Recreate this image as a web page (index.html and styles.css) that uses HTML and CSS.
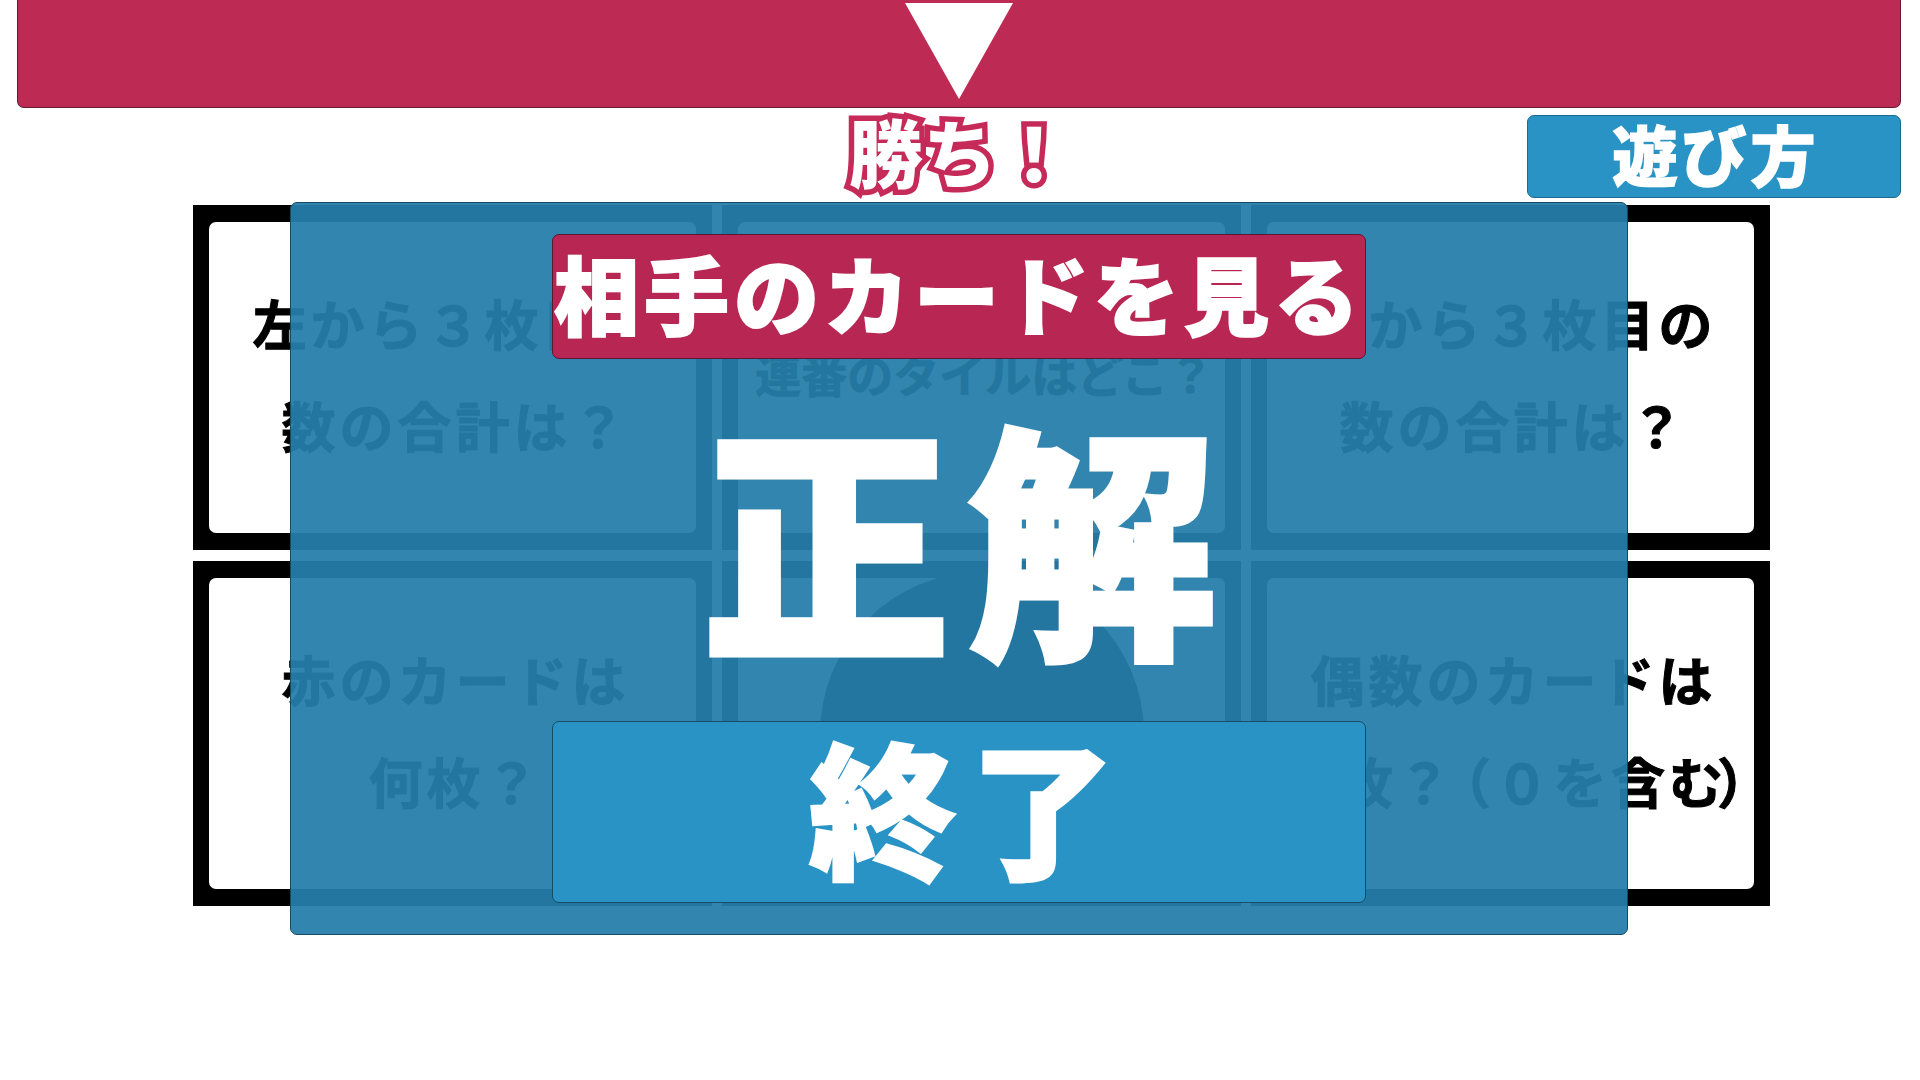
FILE: index.html
```html
<!DOCTYPE html>
<html>
<head>
    <title>Card Game</title>
    <link rel="stylesheet" href="styles.css">
</head>
<body>
    <div class="top-bar">
        <svg class="pointer" viewBox="0 0 108 96"><polygon points="0,0 108,0 54,96" fill="#fff"/></svg>
    </div>

    <div class="status-row">
        <div class="result">勝ち！</div>
        <button class="help-btn">遊び方</button>
    </div>

    <div class="question-grid">
        <div class="card"><div class="card-inner"><p>左から３枚目の</p><p>数の合計は？</p></div></div>
        <div class="card"><div class="card-inner card-small"><p>連番のタイルはどこ？</p></div></div>
        <div class="card"><div class="card-inner"><p>右から３枚目の</p><p>数の合計は？</p></div></div>
        <div class="card"><div class="card-inner"><p>赤のカードは</p><p>何枚？</p></div></div>
        <div class="card"><div class="card-inner card-center"><div class="circle"></div></div></div>
        <div class="card"><div class="card-inner"><p>偶数のカードは</p><p class="line-paren">何枚？<span class="paren-open">（</span>０を含む<span class="paren-close">）</span></p></div></div>
    </div>

    <div class="overlay">
        <button class="see-btn">相手のカードを見る</button>
        <div class="answer">正解</div>
        <button class="end-btn">終了</button>
    </div>
</body>
</html>
```

FILE: styles.css
```css
* {
    box-sizing: border-box;
}

body {
    margin: 0;
    background-color: #fff;
    font-family: "Noto Sans CJK JP", "Noto Sans", sans-serif;
}

.top-bar {
    height: 108px;
    margin: 0 19px 0 17px;
    padding-top: 3px;
    display: flex;
    justify-content: center;
    background-color: #bd2a53;
    border: 1px solid #6b1a33;
    border-top: none;
    border-radius: 0 0 7px 7px;
}

.pointer {
    width: 108px;
    height: 96px;
}

.status-row {
    position: relative;
    height: 97px;
    display: flex;
    justify-content: center;
    align-items: flex-start;
}

.result {
    font-size: 74px;
    line-height: 84px;
    font-weight: 900;
    color: #fff;
    -webkit-text-stroke: 11px #c52a58;
    paint-order: stroke fill;
}

.help-btn {
    position: absolute;
    right: 19px;
    top: 7px;
    width: 374px;
    height: 83px;
    padding: 0 0 6px 4px;
    font-family: inherit;
    font-size: 65px;
    line-height: 1;
    font-weight: 900;
    letter-spacing: 4px;
    color: #fff;
    -webkit-text-stroke: 1.5px #fff;
    background-color: #2a93c5;
    border: 1px solid #1c6a8f;
    border-radius: 7px;
}

.question-grid {
    width: 1577px;
    margin-left: 193px;
    display: grid;
    grid-template-columns: repeat(3, 519px);
    grid-auto-rows: 345px;
    column-gap: 10px;
    row-gap: 11px;
}

.card {
    padding: 17px 16px;
    background-color: #000;
}

.card-inner {
    height: 100%;
    padding-top: 50px;
    background-color: #fff;
    border-radius: 7px;
    text-align: center;
}

.card-inner p {
    margin: 0;
    padding-left: 6px;
    font-size: 54px;
    line-height: 102px;
    font-weight: 700;
    letter-spacing: 4px;
    white-space: nowrap;
    color: #000;
    -webkit-text-stroke: 1px #000;
}

.card-small {
    padding-top: 99px;
}

.card-inner.card-small p {
    font-size: 46px;
    letter-spacing: 0;
}

.card-inner .line-paren {
    padding-left: 14px;
}

.paren-open {
    margin-left: -18px;
}

.paren-close {
    margin-left: -10px;
}

.card-center {
    padding-top: 0;
    display: flex;
    justify-content: center;
    align-items: center;
}

.circle {
    flex-shrink: 0;
    width: 324px;
    height: 324px;
    border-radius: 50%;
    background-color: #000;
}

.overlay {
    position: absolute;
    left: 290px;
    top: 202px;
    width: 1338px;
    height: 733px;
    padding-top: 31px;
    display: flex;
    flex-direction: column;
    align-items: center;
    background-color: rgba(37, 125, 169, 0.94);
    border: 1px solid #154a64;
    border-radius: 7px;
}

.see-btn {
    width: 814px;
    height: 125px;
    padding: 0 0 10px;
    font-family: inherit;
    font-size: 85px;
    line-height: 1;
    font-weight: 900;
    letter-spacing: 5px;
    white-space: nowrap;
    color: #fff;
    -webkit-text-stroke: 2px #fff;
    background-color: #b82753;
    border: 1px solid #5e1730;
    border-radius: 7px;
}

.answer {
    height: 362px;
    padding-left: 18px;
    font-size: 248px;
    line-height: 343px;
    font-weight: 900;
    letter-spacing: 18px;
    color: #fff;
    -webkit-text-stroke: 5px #fff;
}

.end-btn {
    width: 814px;
    height: 182px;
    padding: 0 0 16px 20px;
    font-family: inherit;
    font-size: 146px;
    line-height: 1;
    font-weight: 900;
    letter-spacing: 14px;
    color: #fff;
    -webkit-text-stroke: 3px #fff;
    background-color: #2a93c5;
    border: 1px solid #154c66;
    border-radius: 7px;
}
```
